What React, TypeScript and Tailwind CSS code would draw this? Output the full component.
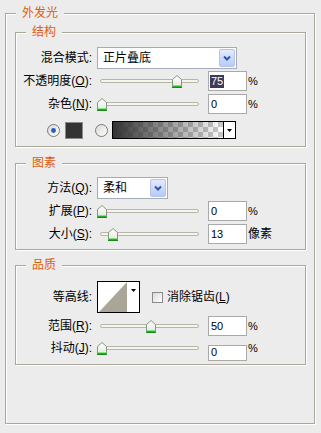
import React from 'react';

type Kids = { children?: React.ReactNode };

function Group({ title, className, children }: { title: string; className: string; children?: React.ReactNode }) {
  return (
    <div className={`relative border border-[#aca899] shadow-[1px_1px_0_#fff,inset_1px_1px_0_#fff] ${className}`}>
      <span className="absolute -top-[8px] left-[10px] bg-[#ececec] px-[6px] text-[12px] leading-[14px] text-[#df5c0e]">
        {title}
      </span>
      {children}
    </div>
  );
}

function Label({ children }: Kids) {
  return (
    <span className="w-[76px] shrink-0 text-right text-[12px] leading-[20px] whitespace-nowrap">{children}</span>
  );
}

// accelerator letter, underlined like a Windows dialog
function Key({ k }: { k: string }) {
  return (
    <>
      (<span className="underline underline-offset-[1px]">{k}</span>)
    </>
  );
}

function Thumb({ left }: { left: number }) {
  return (
    <svg className="absolute top-[4px]" style={{ left }} width="10" height="13" viewBox="0 0 10 13">
      <defs>
        <linearGradient id="thumbFill" x1="0" y1="0" x2="0" y2="1">
          <stop offset="0" stopColor="#ffffff" />
          <stop offset="1" stopColor="#e6e6de" />
        </linearGradient>
      </defs>
      <path d="M0.5 12.5V4.5L5 0.5L9.5 4.5V12.5Z" fill="url(#thumbFill)" stroke="#7f9a7f" />
      <rect x="1" y="10" width="8" height="1" fill="#86e386" />
      <rect x="1" y="11" width="8" height="1" fill="#21b021" />
      <path d="M0 12.5H10" stroke="#1a8a1a" />
    </svg>
  );
}

function Slider({ left }: { left: number }) {
  return (
    <div className="relative ml-[5px] h-[20px] w-[104px] shrink-0">
      <div className="absolute top-[8px] left-[3px] h-[4px] w-[99px] rounded-[2px] border border-[#b7b5a8] bg-[#f5f4ee]" />
      <Thumb left={left} />
    </div>
  );
}

function Field({ value, sel, h = 'h-[20px] items-center' }: { value: string; sel?: boolean; h?: string }) {
  return (
    <div className={`ml-[7px] flex w-[39px] shrink-0 border border-[#a9a9a9] bg-white text-[11px] ${h} ${sel ? 'pl-[1px]' : 'pl-[2px]'}`}>
      {sel ? (
        <span className="bg-[#3b3b5a] px-[1px] leading-[13px] text-white">{value}</span>
      ) : (
        <span className="leading-[13px]">{value}</span>
      )}
    </div>
  );
}

function Unit({ children }: Kids) {
  return <span className="ml-[1px] text-[11px] leading-[20px]">{children}</span>;
}

function Combo({ text, w }: { text: string; w: string }) {
  return (
    <div className={`ml-[5px] flex h-[22px] shrink-0 items-center border border-[#a3acb8] bg-white p-[1px] ${w}`}>
      <span className="flex-1 pl-[4px] text-[12px] leading-[18px]">{text}</span>
      <span className="flex h-full w-[16px] items-center justify-center rounded-[2px] border border-[#b4c4ec] bg-linear-to-b from-[#e3ebfd] to-[#b8caf5]">
        <svg width="8" height="6" viewBox="0 0 8 6">
          <path d="M1 1.5L4 4.5L7 1.5" fill="none" stroke="#2d55b0" strokeWidth="2" />
        </svg>
      </span>
    </div>
  );
}

function DropArrow() {
  return (
    <svg width="5" height="3" viewBox="0 0 5 3">
      <path d="M0 0H5L2.5 3Z" fill="#000" />
    </svg>
  );
}

function Radio({ on }: { on?: boolean }) {
  return (
    <svg className="shrink-0" width="13" height="13" viewBox="0 0 13 13">
      <defs>
        <linearGradient id="radioFill" x1="0" y1="0" x2="1" y2="1">
          <stop offset="0" stopColor="#d8d8d0" />
          <stop offset="1" stopColor="#ffffff" />
        </linearGradient>
      </defs>
      <circle cx="6.5" cy="6.5" r="6" fill="url(#radioFill)" stroke="#7a7a7a" />
      {on && <circle cx="6.5" cy="6.5" r="2.4" fill="#2c59c4" />}
    </svg>
  );
}

export default function App() {
  return (
    <div className="h-[433px] w-[321px] overflow-hidden bg-[#ececec] pt-[13px] pl-[5px] font-['Liberation_Sans','Noto_Sans_CJK_SC',sans-serif] text-black">
      <Group title="外发光" className="h-[411px] w-[310px]">
        {/* 结构 */}
        <Group title="结构" className="mt-[18px] ml-[9px] h-[115px] w-[291px] pt-[14px]">
          <div className="flex items-center">
            <Label>混合模式:</Label>
            <Combo text="正片叠底" w="w-[140px]" />
          </div>
          <div className="mt-[2px] flex h-[20px] items-center">
            <Label>
              不透明度<Key k="O" />:
            </Label>
            <Slider left={75} />
            <Field value="75" sel />
            <Unit>%</Unit>
          </div>
          <div className="mt-[3px] flex h-[20px] items-center">
            <Label>
              杂色<Key k="N" />:
            </Label>
            <Slider left={0} />
            <Field value="0" />
            <Unit>%</Unit>
          </div>
          <div className="mt-[7px] flex h-[18px] items-center pl-[31px]">
            <Radio on />
            <div className="ml-[5px] h-[17px] w-[18px] border border-[#8a8a8a] bg-[#333333]" />
            <div className="ml-[12px]">
              <Radio />
            </div>
            <div className="ml-[4px] flex h-[18px] w-[124px] border border-black bg-white">
              <div className="flex-1 bg-[image:repeating-conic-gradient(#c9c9c9_0_25%,#ffffff_0_50%)] bg-[length:10px_10px]">
                <div className="h-full w-full bg-linear-to-r from-[#333333] to-transparent" />
              </div>
              <div className="flex w-[12px] items-center justify-center border-l border-black">
                <DropArrow />
              </div>
            </div>
          </div>
        </Group>

        {/* 图素 */}
        <Group title="图素" className="mt-[16px] ml-[9px] h-[87px] w-[291px] pt-[13px]">
          <div className="flex items-center">
            <Label>
              方法<Key k="Q" />:
            </Label>
            <Combo text="柔和" w="w-[71px]" />
          </div>
          <div className="mt-[2px] flex h-[20px] items-center">
            <Label>
              扩展<Key k="P" />:
            </Label>
            <Slider left={0} />
            <Field value="0" />
            <Unit>%</Unit>
          </div>
          <div className="mt-[3px] flex h-[20px] items-center">
            <Label>
              大小<Key k="S" />:
            </Label>
            <Slider left={11} />
            <Field value="13" />
            <span className="ml-[1px] text-[12px] leading-[20px]">像素</span>
          </div>
        </Group>

        {/* 品质 */}
        <Group title="品质" className="mt-[15px] ml-[9px] h-[100px] w-[291px] pt-[15px]">
          <div className="flex h-[32px] items-center">
            <Label>等高线:</Label>
            <div className="ml-[5px] flex h-[32px] w-[43px] shrink-0 border border-black bg-white">
              <svg width="29" height="30" viewBox="0 0 29 30">
                <polygon points="1,30 29,0 29,30" fill="#aaa697" />
              </svg>
              <div className="flex w-[12px] justify-center pt-[7px]">
                <DropArrow />
              </div>
            </div>
            <span className="ml-[12px] h-[11px] w-[11px] shrink-0 border border-[#8a8a8a] bg-linear-to-br from-[#dadad4] to-white" />
            <span className="ml-[4px] text-[12px] leading-[20px]">
              消除锯齿<Key k="L" />
            </span>
          </div>
          <div className="mt-[3px] flex h-[20px] items-center">
            <Label>
              范围<Key k="R" />:
            </Label>
            <Slider left={49} />
            <Field value="50" />
            <Unit>%</Unit>
          </div>
          <div className="mt-[2px] flex h-[20px] items-center">
            <Label>
              抖动<Key k="J" />:
            </Label>
            <Slider left={0} />
            <div className="mt-[7px] flex self-start">
              <Field value="0" h="h-[16px] items-start" />
            </div>
            <Unit>%</Unit>
          </div>
        </Group>
      </Group>
    </div>
  );
}
